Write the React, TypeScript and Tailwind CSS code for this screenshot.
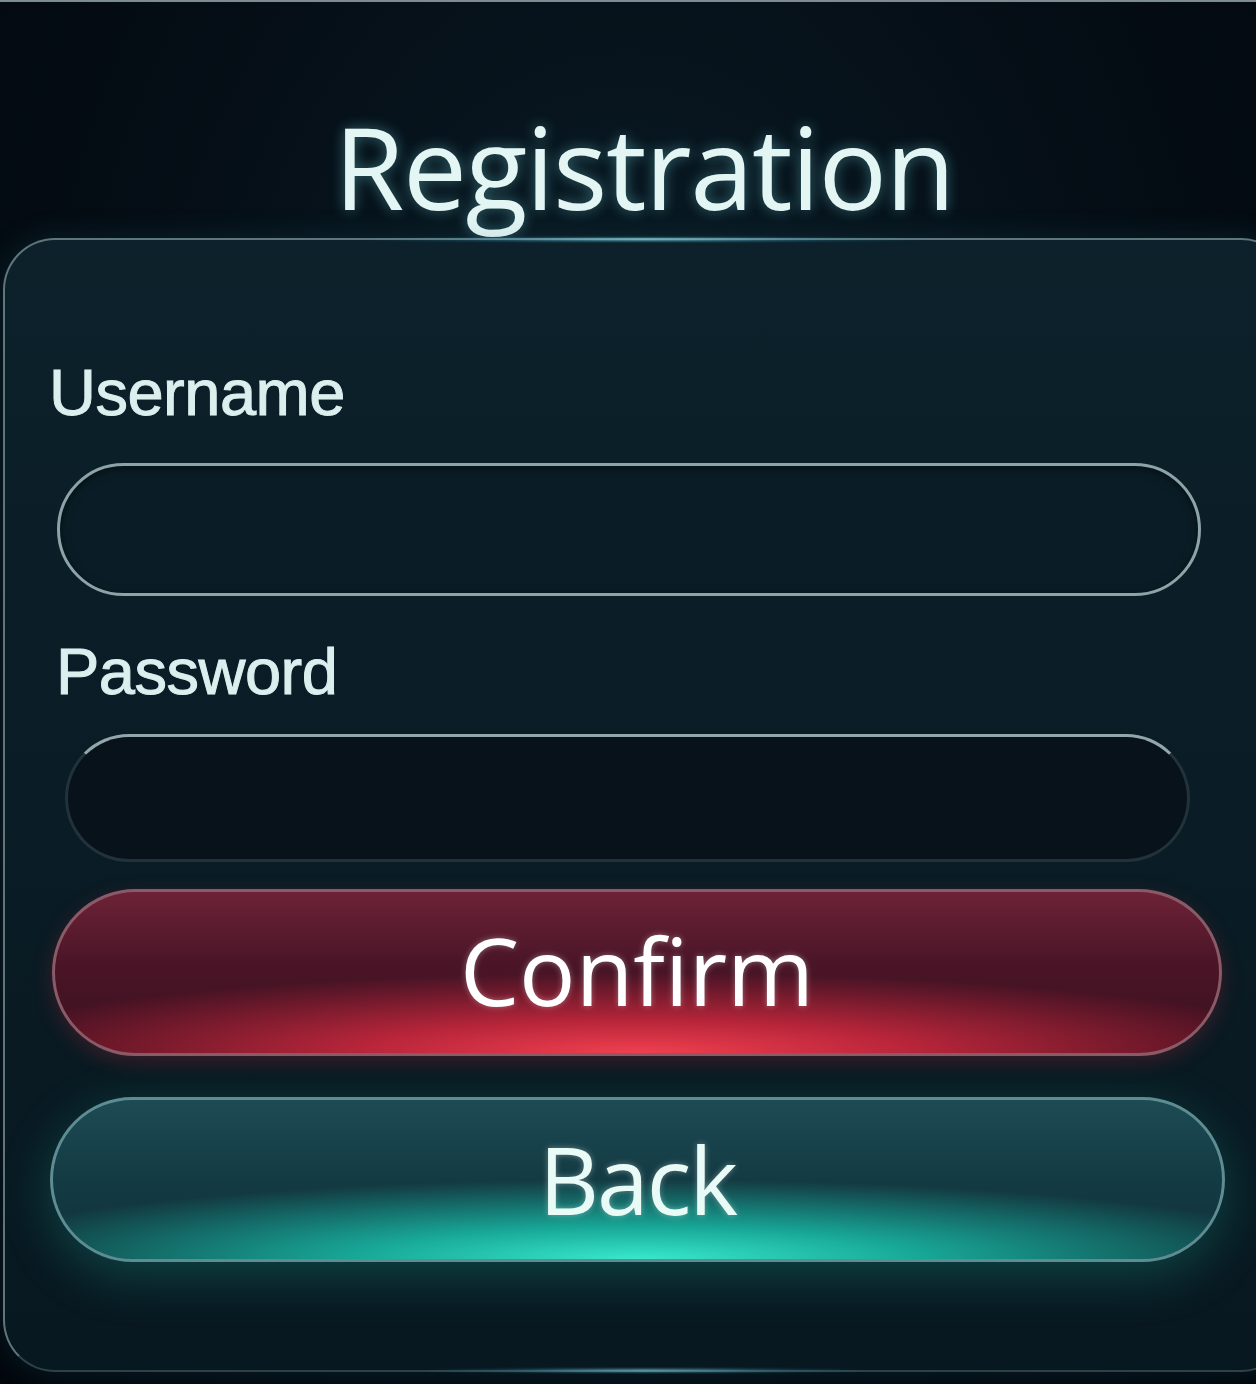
import * as React from "react"

export default function App() {
  return (
    <div className="relative h-[1384px] w-[1256px] overflow-hidden border-t-2 border-[#7d8c92] bg-[radial-gradient(ellipse_at_50%_35%,#0a1d27_0%,#050e16_55%,#02070d_100%)]">
      {/* title */}
      <div className="flex justify-center pl-[32px] pt-[107px]">
        <h1 className="font-['Open_Sans','Noto_Sans',sans-serif] text-[114px] font-medium leading-none tracking-[-1.5px] text-[#e4f6f4] [text-shadow:0_0_14px_rgba(110,210,220,0.45)]">
          Registration
        </h1>
      </div>

      {/* card */}
      <div className="relative ml-[3px] mt-[15px] h-[1134px] w-[1290px] rounded-[52px] border-2 border-[#5e767c] border-b-[#2d4248] bg-[linear-gradient(180deg,#0c212b_0%,#0a1c25_50%,#081820_100%)] pt-[120px] shadow-[0_0_30px_rgba(40,120,140,0.18)]">
        <div className="pointer-events-none absolute left-[360px] top-[-3px] h-[5px] w-[560px] rounded-full bg-[radial-gradient(ellipse_at_center,rgba(140,230,245,0.9)_0%,rgba(60,160,190,0.35)_45%,transparent_75%)] blur-[1px]" />
        <div className="pointer-events-none absolute bottom-[-3px] left-[420px] h-[5px] w-[440px] rounded-full bg-[radial-gradient(ellipse_at_center,rgba(140,230,245,0.8)_0%,rgba(60,160,190,0.3)_45%,transparent_75%)] blur-[1px]" />

        <div className="ml-[44px] font-['Liberation_Sans',Arial,sans-serif] text-[65px] leading-none tracking-[-0.5px] text-[#dcefef] [-webkit-text-stroke:1px_#dcefef]">
          Username
        </div>
        <div className="ml-[52px] mt-[38px] h-[133px] w-[1144px] rounded-full border-[3px] border-[#8ca3a8] bg-[#0a1d26] shadow-[inset_0_2px_10px_rgba(0,0,0,0.5)]" />

        <div className="ml-[51px] mt-[43px] font-['Liberation_Sans',Arial,sans-serif] text-[65px] leading-none tracking-[-0.5px] text-[#dcefef] [-webkit-text-stroke:1px_#dcefef]">
          Password
        </div>
        <div className="ml-[60px] mt-[30px] h-[128px] w-[1125px] rounded-full border-[3px] border-[#22323a] border-t-[#93a7ab] bg-[#07121a]" />

        <button className="ml-[47px] mt-[27px] flex h-[167px] w-[1170px] items-center justify-center rounded-full border-[3px] border-[#8a5a66] bg-[radial-gradient(ellipse_60%_50%_at_50%_100%,#f0404f_0%,#b8253a_40%,transparent_100%),linear-gradient(180deg,#6d2237_0%,#4a1527_45%,#3a0f1e_100%)] pb-[6px] shadow-[0_6px_20px_rgba(200,40,60,0.25)]">
          <span className="font-['Open_Sans','Noto_Sans',sans-serif] text-[94px] font-medium leading-none text-white [text-shadow:0_0_6px_rgba(255,255,255,0.35)]">
            Confirm
          </span>
        </button>

        <button className="ml-[45px] mt-[41px] flex h-[165px] w-[1175px] items-center justify-center rounded-full border-[3px] border-[#5d8d92] bg-[radial-gradient(ellipse_60%_50%_at_50%_100%,#38e8cc_0%,#18a898_40%,transparent_100%),linear-gradient(180deg,#1d4b54_0%,#143c45_45%,#0f3038_100%)] shadow-[0_14px_50px_rgba(30,200,180,0.25)]">
          <span className="font-['Open_Sans','Noto_Sans',sans-serif] text-[93px] font-medium leading-none tracking-[-2px] text-[#e8fbf7] [text-shadow:0_0_6px_rgba(255,255,255,0.35)]">
            Back
          </span>
        </button>
      </div>
    </div>
  )
}
